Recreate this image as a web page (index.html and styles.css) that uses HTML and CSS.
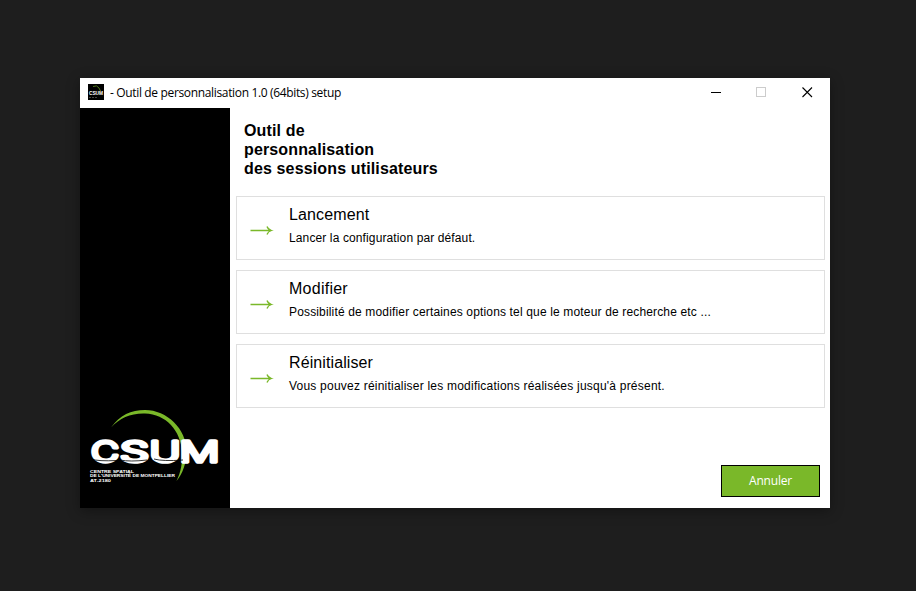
FILE: index.html
```html
<!DOCTYPE html>
<html lang="fr">
<head>
<meta charset="utf-8">
<title>Outil de personnalisation</title>
<link rel="stylesheet" href="styles.css">
</head>
<body>
<main class="window">
  <header class="titlebar">
    <svg class="app-icon" width="16" height="16" viewBox="0 0 16 16">
      <rect width="16" height="16" fill="#000"/>
      <path d="M5 2.500Q9 0.500 11 4L12.500 7" fill="none" stroke="#4f7a1c"/>
      <text x="1" y="11" textLength="14" lengthAdjust="spacingAndGlyphs" class="mini">CSUM</text>
      <path d="M1 13.500H9" stroke="#444" stroke-dasharray="2 1"/>
    </svg>
    <span class="caption">- Outil de personnalisation 1.0 (64bits) setup</span>
    <svg class="controls" width="104" height="12" viewBox="0 0 104 12" shape-rendering="crispEdges">
      <path d="M0 6.500H10" stroke="#000"/>
      <rect x="45.500" y="1.500" width="9" height="9" fill="none" stroke="#ccc"/>
      <path d="M91.500 1.500L101 11M101 1.500L91.500 11" stroke="#000" stroke-width="1.100" shape-rendering="auto"/>
    </svg>
  </header>
  <div class="body">
    <aside class="side">
      <svg width="150" height="100" viewBox="0 0 150 100">
        <path d="M31 27.500C40 15 51 10 65 10C87 10 106.500 29 106.500 51C106.500 63 103 73 96.500 81C101 72 102.500 63 102 52C101 31 86 14 65 13.500C51 13 40 18 31 27.500Z" fill="#7ab829"/>
        <g class="logo">
          <text x="11" y="62.300" textLength="28" lengthAdjust="spacingAndGlyphs">C</text>
          <text x="40" y="62.300" textLength="29" lengthAdjust="spacingAndGlyphs">S</text>
          <text x="69.500" y="62.300" textLength="31" lengthAdjust="spacingAndGlyphs">U</text>
          <text x="99.500" y="62.300" textLength="40" lengthAdjust="spacingAndGlyphs">M</text>
        </g>
        <path d="M11 59Q18 61.500 37 60.500M40 60Q50 62 67 60M74 59Q83 61.500 103 60" fill="none" stroke="#000" stroke-width=".8"/>
        <g class="tagline">
          <text x="10" y="72.500" textLength="44" lengthAdjust="spacingAndGlyphs">CENTRE SPATIAL</text>
          <text x="10" y="77" textLength="85" lengthAdjust="spacingAndGlyphs">DE L'UNIVERSITÉ DE MONTPELLIER</text>
          <text x="10" y="81.500" textLength="21" lengthAdjust="spacingAndGlyphs">AT-2180</text>
        </g>
      </svg>
    </aside>
    <section class="content">
      <h1>Outil de<br>personnalisation<br>des sessions utilisateurs</h1>
      <div class="actions">
        <div class="action">
          <svg class="arrow" width="24" height="12" viewBox="0 0 24 12"><path d="M0.500 6.500H21M17 2.500Q18 5.500 21.500 6.500Q18 7.500 17 10.500"/></svg>
          <div><h2 class="t1">Lancement</h2><p class="d1">Lancer la configuration par défaut.</p></div>
        </div>
        <div class="action">
          <svg class="arrow" width="24" height="12" viewBox="0 0 24 12"><path d="M0.500 6.500H21M17 2.500Q18 5.500 21.500 6.500Q18 7.500 17 10.500"/></svg>
          <div><h2 class="t2">Modifier</h2><p class="d2">Possibilité de modifier certaines options tel que le moteur de recherche etc ...</p></div>
        </div>
        <div class="action">
          <svg class="arrow" width="24" height="12" viewBox="0 0 24 12"><path d="M0.500 6.500H21M17 2.500Q18 5.500 21.500 6.500Q18 7.500 17 10.500"/></svg>
          <div><h2 class="t3">Réinitialiser</h2><p class="d3">Vous pouvez réinitialiser les modifications réalisées jusqu'à présent.</p></div>
        </div>
      </div>
      <button class="cancel">Annuler</button>
    </section>
  </div>
</main>
</body>
</html>
```
FILE: styles.css
```css
* { box-sizing: border-box; }
body { margin: 0; height: 591px; background: #1e1e1e; padding: 78px 80px; overflow: hidden; font-family: "Liberation Sans", Arial, sans-serif; color: #000; }
.window { width: 750px; height: 430px; background: #fff; box-shadow: 0 3px 12px rgba(0,0,0,.35); display: flex; flex-direction: column; }
.titlebar { height: 30px; display: flex; align-items: center; padding: 0 15px 0 8px; }
.app-icon { margin-top: -2px; }
.mini { font: bold 5.5px "Liberation Sans", sans-serif; fill: #fff; }
.caption { margin-left: 6px; flex: 1; font: 12px/18px "Open Sans", sans-serif; letter-spacing: -.345px; white-space: nowrap; }
.controls { margin-top: -2px; }
.body { flex: 1; display: flex; }
.side { width: 150px; background: #000; display: flex; align-items: flex-end; padding-bottom: 8px; }
.side svg { display: block; }
.logo { font: 300 29px Inter, sans-serif; fill: #fff; stroke: #fff; stroke-width: 3.4; stroke-linejoin: round; }
.tagline { font: bold 3.6px/1 "Liberation Sans", sans-serif; fill: #fff; }
.content { flex: 1; display: flex; flex-direction: column; padding: 13px 5px 11px 6px; }
h1 { margin: 0 0 18px 8px; font-size: 16px; line-height: 19px; letter-spacing: .14px; }
.actions { display: flex; flex-direction: column; gap: 10px; }
.action { height: 64px; border: 1px solid #dfdfdf; display: flex; padding: 8px 13px; }
.arrow { margin: 19px 15px 0 0; fill: none; stroke: #7ab829; stroke-width: 1.3; }
h2 { margin: 0; font-size: 16px; font-weight: 400; line-height: 19px; }
p { margin: 7px 0 0; font-size: 12px; line-height: 14px; white-space: nowrap; }
.t1 { letter-spacing: .12px; }
.t2 { letter-spacing: .25px; }
.t3 { letter-spacing: .1px; }
.d1 { letter-spacing: .12px; }
.d2 { letter-spacing: .155px; }
.d3 { letter-spacing: .22px; }
.cancel { margin: auto 5px 0 auto; width: 99px; height: 32px; padding: 0 0 1px; border: 1px solid #000; border-radius: 0; background: #7ab829; color: #fff; font: 12px "Open Sans", sans-serif; letter-spacing: -.2px; }
```
